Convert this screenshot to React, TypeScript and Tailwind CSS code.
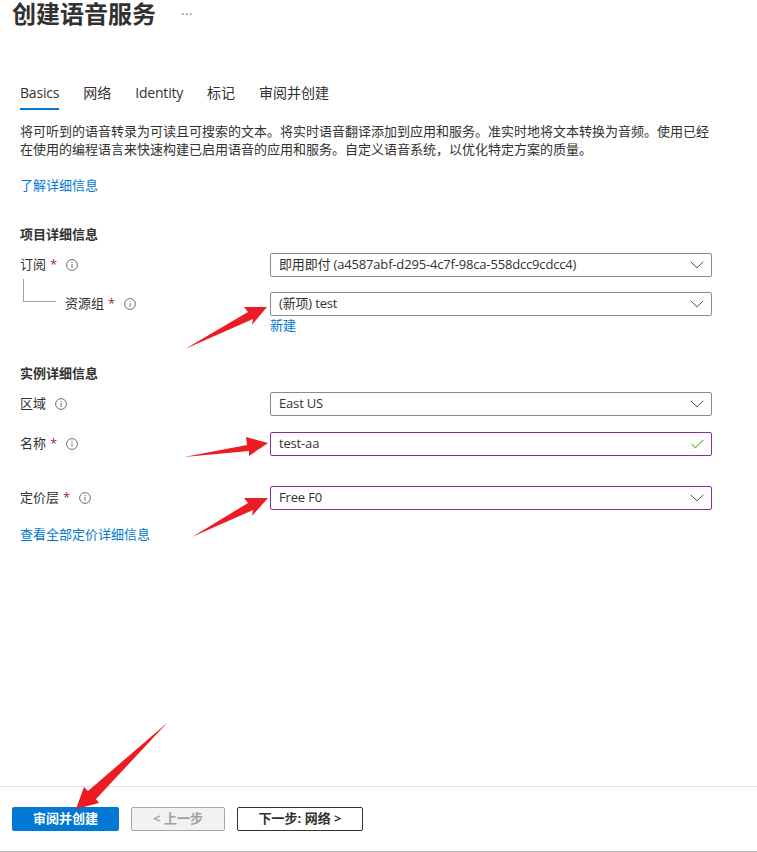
import React from "react";

const font = { fontFamily: '"Open Sans", "Noto Sans CJK SC", sans-serif' };

function Info() {
  return (
    <svg width="12" height="12" viewBox="0 0 12 12" className="shrink-0">
      <circle cx="6" cy="6" r="5.4" fill="none" stroke="#6e6e6e" strokeWidth="1" />
      <rect x="5.5" y="5" width="1" height="3.8" fill="#6e6e6e" />
      <rect x="5.5" y="3" width="1" height="1" fill="#6e6e6e" />
    </svg>
  );
}

function Chevron() {
  return (
    <svg width="14" height="8" viewBox="0 0 14 8" className="shrink-0">
      <path d="M0.7 0.8 L7 6.8 L13.3 0.8" fill="none" stroke="#505050" strokeWidth="1" />
    </svg>
  );
}

function Check() {
  return (
    <svg width="13" height="10" viewBox="0 0 13 10" className="shrink-0">
      <path d="M0.8 5.2 L4.3 8.8 L12.4 0.8" fill="none" stroke="#6bb33a" strokeWidth="1.1" />
    </svg>
  );
}

function Field({ value, active, check }: { value: string; active?: boolean; check?: boolean }) {
  return (
    <div
      className={
        "flex h-6 w-[442px] items-center justify-between rounded-[2px] border bg-white pl-2 pr-[7px] text-[13px] tracking-[-0.17px] text-[#323130] " +
        (active ? "border-[#8c2ba8]" : "border-[#8a8a8a]")
      }
    >
      <span>{value}</span>
      {check ? <Check /> : <Chevron />}
    </div>
  );
}

function Label({ text, required, indent }: { text: string; required?: boolean; indent?: boolean }) {
  return (
    <div className={"flex w-[250px] shrink-0 items-center text-[13px] text-[#323130] " + (indent ? "pl-[45px]" : "")}>
      <span>{text}</span>
      {required && <span className="ml-[4px] text-[#a4262c]">*</span>}
      <span className="ml-[9px]">
        <Info />
      </span>
    </div>
  );
}

function Tab({ text, active, tight }: { text: string; active?: boolean; tight?: boolean }) {
  return (
    <div
      className={
        "flex h-[31px] items-start border-b-2 pt-[3px] text-[14px] text-[#323130] " +
        (tight ? "tracking-[-0.2px] " : "") +
        (active ? "border-[#0078d4]" : "border-transparent")
      }
    >
      {text}
    </div>
  );
}

export default function App() {
  return (
    <div className="relative flex h-[852px] w-[757px] flex-col overflow-hidden bg-white" style={font}>
      <div className="flex h-[28px] items-center pl-3">
        <h1 className="text-[24px] font-bold leading-[28px] text-[#323130]">创建语音服务</h1>
        <span className="ml-[25px] text-[13px] leading-[28px] tracking-[0.5px] text-[#777]">···</span>
      </div>

      <div className="mt-[51px] flex pl-5">
        <div className="flex gap-6">
          <Tab text="Basics" active tight />
          <Tab text="网络" />
          <Tab text="Identity" tight />
          <Tab text="标记" />
          <Tab text="审阅并创建" />
        </div>
      </div>

      <div className="mt-[12px] pl-5 pr-[40px] text-[13px] leading-[18px] text-[#323130]">
        <p>将可听到的语音转录为可读且可搜索的文本。将实时语音翻译添加到应用和服务。准实时地将文本转换为音频。使用已经</p>
        <p>在使用的编程语言来快速构建已启用语音的应用和服务。自定义语音系统，以优化特定方案的质量。</p>
      </div>

      <a className="mt-[18px] pl-5 text-[13px] leading-[18px] text-[#0078d4]">了解详细信息</a>

      <div className="mt-[31px] pl-5 text-[13px] font-bold leading-[18px] text-[#323130]">项目详细信息</div>

      <div className="mt-[10px] flex pl-5">
        <Label text="订阅" required />
        <Field value="即用即付 (a4587abf-d295-4c7f-98ca-558dcc9cdcc4)" />
      </div>

      <div className="relative mt-[15px] flex pl-5">
        <div className="absolute left-[23px] top-[-13px] h-[23px] w-[33px] border-b border-l border-[#a0a0a0]" />
        <Label text="资源组" required indent />
        <Field value="(新项) test" />
      </div>

      <a className="ml-[270px] text-[13px] leading-[18px] text-[#0078d4]">新建</a>

      <div className="mt-[30px] pl-5 text-[13px] font-bold leading-[18px] text-[#323130]">实例详细信息</div>

      <div className="mt-[10px] flex pl-5">
        <Label text="区域" />
        <Field value="East US" />
      </div>

      <div className="mt-4 flex pl-5">
        <Label text="名称" required />
        <Field value="test-aa" active check />
      </div>

      <div className="mt-[30px] flex pl-5">
        <Label text="定价层" required />
        <Field value="Free F0" active />
      </div>

      <a className="mt-[15px] pl-5 text-[13px] leading-[18px] text-[#0078d4]">查看全部定价详细信息</a>

      <div className="mt-auto flex h-[66px] items-start gap-3 border-t border-b border-t-[#e1e1e1] border-b-[#bdbdbd] pl-3 pt-5">
        <button className="flex h-6 w-[107px] items-center justify-center rounded-[2px] bg-[#0078d4] text-[13px] font-bold text-white">
          审阅并创建
        </button>
        <button className="flex h-6 w-[94px] items-center justify-center rounded-[2px] border border-[#a6a6a6] bg-[#f3f2f1] text-[13px] font-bold text-[#a19f9d]">
          &lt; 上一步
        </button>
        <button className="flex h-6 w-[126px] items-center justify-center rounded-[2px] border border-[#323130] bg-white text-[13px] font-bold text-[#323130]">
          下一步: 网络 &gt;
        </button>
      </div>

      <svg className="pointer-events-none absolute left-0 top-0" width="757" height="852" viewBox="0 0 757 852">
        <g fill="#ed1c24">
          <polygon points="185,349 248,312 244,307 267,307 252,325 253,319" />
          <polygon points="184,457 247,445 246,437 268,443 249,456 249,451" />
          <polygon points="192,537 248,503 244,498 268,498 252,516 253,510" />
          <polygon points="167,723 88,791 84,787 76,809 99,803 96,799" />
        </g>
      </svg>
    </div>
  );
}
